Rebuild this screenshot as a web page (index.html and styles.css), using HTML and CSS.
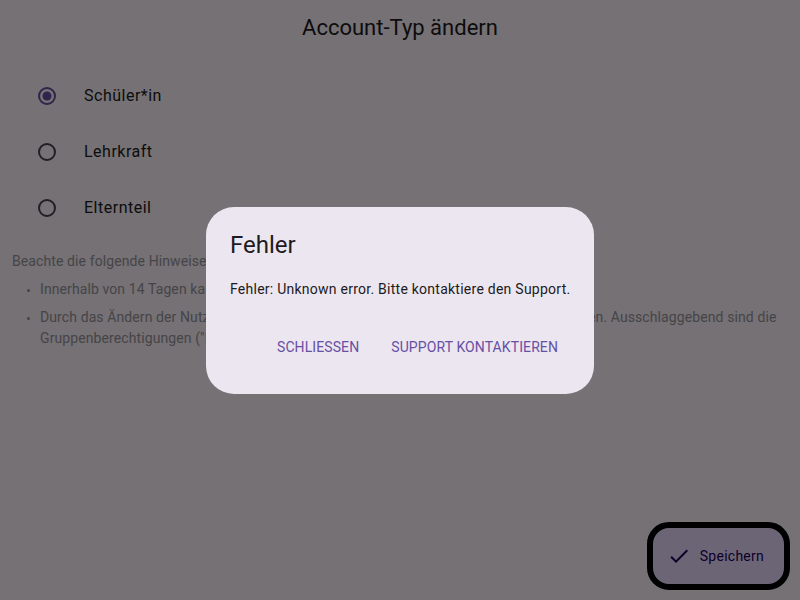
FILE: index.html
```html
<!DOCTYPE html>
<html lang="de">
<head>
<meta charset="utf-8">
<title>Account-Typ ändern</title>
<link rel="stylesheet" href="styles.css">
</head>
<body>
<main class="page">
  <h1 class="title">Account-Typ ändern</h1>
  <div class="radios">
    <label class="radio-row">
      <svg class="radio" viewBox="0 0 20 20" width="20" height="20"><circle cx="10" cy="10" r="8" fill="none" stroke="#6750A4" stroke-width="2"/><circle cx="10" cy="10" r="4.5" fill="#6750A4"/></svg>
      <span class="radio-label">Schüler*in</span>
    </label>
    <label class="radio-row">
      <svg class="radio" viewBox="0 0 20 20" width="20" height="20"><circle cx="10" cy="10" r="8" fill="none" stroke="#49454F" stroke-width="2"/></svg>
      <span class="radio-label">Lehrkraft</span>
    </label>
    <label class="radio-row">
      <svg class="radio" viewBox="0 0 20 20" width="20" height="20"><circle cx="10" cy="10" r="8" fill="none" stroke="#49454F" stroke-width="2"/></svg>
      <span class="radio-label">Elternteil</span>
    </label>
  </div>
  <section class="hints">
    <p class="hint-head">Beachte die folgende Hinweise:</p>
    <ul class="hint-list">
      <li>Innerhalb von 14 Tagen kannst du den Account-Typ nur einmal ändern.</li>
      <li>Durch das Ändern der Nutzerrolle ändern sich nicht deine Rechte in bestehenden Gruppen. Ausschlaggebend sind die Gruppenberechtigungen ("Rollen") in den jeweiligen Gruppen.</li>
    </ul>
  </section>
  <button class="fab">
    <svg class="fab-icon" viewBox="0 0 24 24" width="24" height="24"><path d="M9 16.17 4.83 12l-1.42 1.41L9 19 21 7l-1.41-1.41z" fill="#21005D"/></svg>
    <span>Speichern</span>
  </button>
</main>
<div class="scrim"></div>
<div class="dialog-wrap">
  <div class="dialog" role="dialog">
    <h2 class="dialog-title">Fehler</h2>
    <p class="dialog-body">Fehler: Unknown error. Bitte kontaktiere den Support.</p>
    <div class="dialog-actions">
      <button class="text-btn">SCHLIESSEN</button>
      <button class="text-btn">SUPPORT KONTAKTIEREN</button>
    </div>
  </div>
</div>
</body>
</html>
```

FILE: styles.css
```css
* { box-sizing: border-box; }
html, body {
  margin: 0;
  height: 100%;
}
body {
  background: #FEF7FF;
  font-family: Roboto, "Liberation Sans", sans-serif;
  color: #1D1B20;
  overflow: hidden;
}
.page {
  height: 600px;
  display: flex;
  flex-direction: column;
}
.title {
  margin: 0;
  padding-top: 14px;
  height: 68px;
  text-align: center;
  font-size: 22px;
  line-height: 28px;
  font-weight: 400;
}
.radios {
  display: flex;
  flex-direction: column;
  padding-left: 37px;
}
.radio-row {
  height: 56px;
  display: flex;
  align-items: center;
  gap: 27px;
}
.radio { flex: none; }
.radio-label {
  font-size: 16px;
  letter-spacing: 0.5px;
  line-height: 24px;
}
.hints {
  padding: 15px 0 0 12px;
  color: #9A959B;
  font-size: 14px;
  line-height: 21px;
  letter-spacing: 0.1px;
}
.hint-head { margin: 0 0 7px 0; }
.hint-list {
  margin: 0;
  padding-left: 28px;
}
.hint-list li { margin-bottom: 7px; }
.hint-list li::marker { font-size: 10px; }
.fab {
  position: fixed;
  right: 10px;
  bottom: 10px;
  height: 68px;
  border: 6px solid #000;
  border-radius: 22px;
  background: #EADDFF;
  color: #21005D;
  display: flex;
  align-items: center;
  gap: 9px;
  padding: 0 20px 0 14px;
  font-family: Roboto, "Liberation Sans", sans-serif;
  font-size: 14px;
  font-weight: 400;
  letter-spacing: 0.25px;
}
.fab-icon { flex: none; }
.scrim {
  position: fixed;
  inset: 0;
  background: rgba(0, 0, 0, 0.54);
}
.dialog-wrap {
  position: fixed;
  inset: 0;
  display: flex;
  align-items: center;
  justify-content: center;
}
.dialog {
  width: 388px;
  background: #ECE6F0;
  border-radius: 28px;
  padding: 22px 24px 23px 24px;
}
.dialog-title {
  margin: 0 0 18px 0;
  font-size: 24px;
  line-height: 32px;
  font-weight: 400;
  color: #1D1B20;
}
.dialog-body {
  margin: 0 0 24px 0;
  font-size: 14px;
  line-height: 20px;
  letter-spacing: 0.25px;
  white-space: nowrap;
  color: #1D1B20;
}
.dialog-actions {
  display: flex;
  justify-content: flex-end;
  gap: 8px;
}
.text-btn {
  height: 48px;
  padding: 0 12px;
  border: none;
  background: transparent;
  color: #6750A4;
  font-family: Roboto, "Liberation Sans", sans-serif;
  font-size: 14px;
  font-weight: 400;
  letter-spacing: 0.1px;
}
```
